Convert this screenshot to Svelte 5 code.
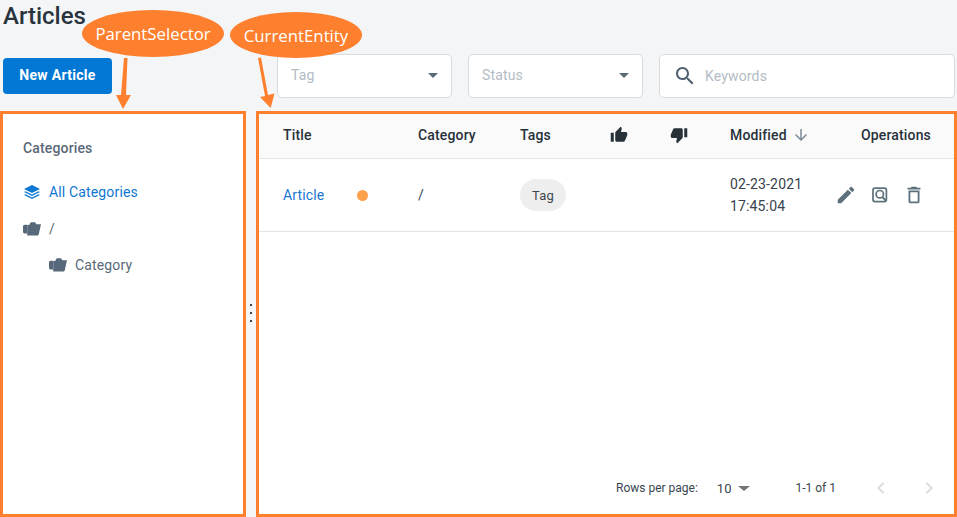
<script lang="ts">
  const columns = ['Title', 'Category', 'Tags'];
</script>

{#snippet folder()}
  <svg class="folder" viewBox="0 0 18 14" aria-hidden="true">
    <path d="M0 4.500C0 3.400.8 2.700 1.800 2.700H4v8.800H1.800C.8 11.500 0 10.800 0 9.700z" />
    <path d="M4.200 3 6.500 2.800 7.200 1C7.400.5 7.800.3 8.300.3h3.300c.5 0 .8.2 1 .6l.7 1.300H18l-2.300 10.400c-.1.500-.5.800-1 .8H4.200z" />
  </svg>
{/snippet}

<div class="page">
  <h1>Articles</h1>

  <div class="toolbar">
    <button type="button" class="primary">New Article</button>
    <div class="filters">
      <div class="field select"><span>Tag</span><i class="caret"></i></div>
      <div class="field select"><span>Status</span><i class="caret"></i></div>
      <div class="field search">
        <svg viewBox="0 0 24 24" aria-hidden="true"><path d="M15.5 14h-.79l-.28-.27C15.41 12.59 16 11.11 16 9.5 16 5.91 13.09 3 9.5 3S3 5.91 3 9.5 5.91 16 9.5 16c1.61 0 3.09-.59 4.23-1.57l.27.28v.79l5 4.99L20.49 19l-4.99-5zm-6 0C7.01 14 5 11.99 5 9.5S7.01 5 9.5 5 14 7.01 14 9.5 11.99 14 9.5 14z" /></svg>
        <span>Keywords</span>
      </div>
    </div>
  </div>

  <div class="main">
    <aside class="panel side">
      <div class="side-title">Categories</div>
      <div class="tree-row active">
        <svg class="layers" viewBox="0 0 16 14" aria-hidden="true">
          <path d="M8 0 16 4 8 8 0 4z" />
          <path d="M1.500 6.300 8 9.500 14.500 6.300 16 7.100 8 11 0 7.100z" />
          <path d="M1.500 9.300 8 12.500 14.500 9.300 16 10.100 8 14 0 10.100z" />
        </svg>
        <span>All Categories</span>
      </div>
      <div class="tree-row">{@render folder()}<span>/</span></div>
      <div class="tree-row nested">{@render folder()}<span>Category</span></div>
    </aside>

    <div class="splitter"><b></b><b></b><b></b></div>

    <section class="panel content">
      <div class="grid head">
        {#each columns as col}
          <div>{col}</div>
        {/each}
        <div class="thumb">
          <svg viewBox="0 0 24 24" aria-hidden="true"><path d="M1 21h4V9H1v12zm22-11c0-1.1-.9-2-2-2h-6.31l.95-4.57.03-.32c0-.41-.17-.79-.44-1.06L14.17 1 7.59 7.59C7.22 7.95 7 8.45 7 9v10c0 1.1.9 2 2 2h9c.83 0 1.54-.5 1.84-1.22l3.02-7.05c.09-.23.14-.47.14-.73v-2z" /></svg>
        </div>
        <div class="thumb">
          <svg viewBox="0 0 24 24" aria-hidden="true"><path d="M15 3H6c-.83 0-1.54.5-1.84 1.22l-3.02 7.05c-.09.23-.14.47-.14.73v2c0 1.1.9 2 2 2h6.31l-.95 4.57-.03.32c0 .41.17.79.44 1.06L9.83 23l6.59-6.59c.36-.36.58-.86.58-1.41V5c0-1.1-.9-2-2-2zm4 0v12h4V3h-4z" /></svg>
        </div>
        <div class="modified">
          Modified
          <svg viewBox="0 0 24 24" aria-hidden="true"><path d="M20 12l-1.41-1.41L13 16.17V4h-2v12.17l-5.58-5.59L4 12l8 8 8-8z" /></svg>
        </div>
        <div>Operations</div>
      </div>

      <div class="grid row">
        <div class="title-cell"><span class="link">Article</span><i class="dot"></i></div>
        <div>/</div>
        <div><span class="chip">Tag</span></div>
        <div></div>
        <div></div>
        <div class="date">02-23-2021<br />17:45:04</div>
        <div class="ops">
          <svg class="edit" viewBox="0 0 24 24" aria-hidden="true"><path d="M3 17.25V21h3.75L17.81 9.94l-3.75-3.75L3 17.25zM20.71 7.04c.39-.39.39-1.02 0-1.41l-2.34-2.34c-.39-.39-1.02-.39-1.41 0l-1.83 1.83 3.75 3.75 1.83-1.83z" /></svg>
          <svg class="preview" viewBox="0 0 16 16" aria-hidden="true">
            <rect x="1" y="1.200" width="13.400" height="13.400" rx="2" fill="none" stroke-width="1.700" />
            <circle cx="7.800" cy="7.200" r="3.700" fill="none" stroke-width="1.700" />
            <path d="M10.300 10l3.800 3.800" fill="none" stroke-width="1.800" />
          </svg>
          <svg class="trash" viewBox="0 0 24 24" aria-hidden="true"><path d="M6 19c0 1.1.9 2 2 2h8c1.1 0 2-.9 2-2V7H6v12zM8 9h8v10H8V9zm7.5-5l-1-1h-5l-1 1H5v2h14V4h-3.5z" /></svg>
        </div>
      </div>

      <div class="pager">
        <span class="rows-label">Rows per page:</span>
        <span class="rows-value">10</span>
        <i class="caret grey"></i>
        <span class="range">1-1 of 1</span>
        <svg viewBox="0 0 24 24" aria-hidden="true"><path d="M15.41 7.41L14 6l-6 6 6 6 1.41-1.41L10.83 12z" /></svg>
        <svg viewBox="0 0 24 24" aria-hidden="true"><path d="M10 6L8.59 7.41 13.17 12l-4.58 4.59L10 18l6-6z" /></svg>
      </div>
    </section>
  </div>

  <!-- annotations drawn over the screenshot -->
  <div class="bubble parent">ParentSelector</div>
  <div class="bubble current">CurrentEntity</div>
  <svg class="arrows" viewBox="0 0 300 60" aria-hidden="true">
    <path d="M124 1h3.500L126 38h5L123 52 116 38h5z" />
    <path d="M258 1l3-.500L268 38l6.500-1.500-3.800 14.500L260 40l5-1z" />
  </svg>
</div>

<style>
  :global(body) {
    background: #f4f5f7;
  }

  .page {
    position: relative;
    display: flex;
    flex-direction: column;
    height: 517px;
    overflow: hidden;
    box-sizing: border-box;
    font-family: Roboto, "Liberation Sans", sans-serif;
    font-size: 14px;
    letter-spacing: .15px;
    color: #2a3540;
  }

  h1 {
    margin: 0;
    padding-left: 3px;
    height: 32px;
    font-size: 24px;
    line-height: 32px;
    font-weight: 500;
    letter-spacing: 0;
    color: #29333d;
  }

  .toolbar {
    display: flex;
    align-items: center;
    height: 44px;
    margin-top: 22px;
    padding: 0 2px 0 3px;
  }

  .primary {
    width: 109px;
    height: 36px;
    padding: 0 0 2px;
    border: none;
    border-radius: 4px;
    background: #0277d4;
    color: #fff;
    font: 700 14px Roboto, sans-serif;
    letter-spacing: .3px;
  }

  .filters {
    display: flex;
    flex: 1;
    gap: 16px;
    margin-left: 165px;
  }

  .field {
    display: flex;
    align-items: center;
    box-sizing: border-box;
    height: 44px;
    background: #fff;
    border: 1px solid #d8dbde;
    border-radius: 5px;
    color: #b3bcc4;
  }

  .select {
    width: 175px;
    justify-content: space-between;
    padding: 0 13px 2px 13px;
  }

  .search {
    flex: 1;
    padding-left: 13px;
    gap: 8px;
  }

  .search svg {
    width: 24px;
    height: 24px;
    fill: #4e5f70;
  }

  .caret {
    display: block;
    width: 0;
    height: 0;
    border-left: 5px solid transparent;
    border-right: 5px solid transparent;
    border-top: 5px solid #5a6b78;
  }

  .caret.grey {
    border-left-width: 6px;
    border-right-width: 6px;
    border-top-color: #757575;
  }

  .main {
    flex: 1;
    display: flex;
    margin-top: 13px;
    min-height: 0;
  }

  .panel {
    box-sizing: border-box;
    background: #fff;
    border: 3px solid #fe7f2d;
  }

  .side {
    width: 246px;
    padding: 20px 20px 0;
    color: #5a6978;
  }

  .side-title {
    height: 28px;
    line-height: 28px;
    font-weight: 500;
    margin-bottom: 12px;
  }

  .tree-row {
    display: flex;
    align-items: center;
    height: 36.500px;
    gap: 8px;
  }

  .tree-row.active {
    color: #0f77d2;
  }

  .tree-row.nested {
    padding-left: 26px;
  }

  .layers {
    width: 16px;
    height: 14px;
    margin: 0 1px;
    fill: #0f77d2;
  }

  .folder {
    width: 18px;
    height: 14px;
    fill: #56687a;
  }

  .splitter {
    width: 10px;
    display: flex;
    flex-direction: column;
    align-items: center;
    justify-content: center;
    gap: 6px;
    padding-bottom: 3px;
    box-sizing: border-box;
  }

  .splitter b {
    width: 2px;
    height: 2px;
    background: #3c4650;
  }

  .content {
    flex: 1;
    display: flex;
    flex-direction: column;
    min-width: 0;
  }

  .grid {
    display: grid;
    box-sizing: border-box;
    grid-template-columns: 135px 102px 90px 60px 60px 131px 1fr;
    padding-left: 24px;
    align-items: center;
  }

  .head {
    height: 45px;
    padding-bottom: 2px;
    background: #fafafa;
    border-bottom: 1px solid #e4e4e4;
    font-weight: 500;
    color: #28313a;
  }

  .thumb svg {
    display: block;
    width: 18px;
    height: 18px;
    fill: #263238;
  }

  .modified {
    display: flex;
    align-items: center;
    gap: 5px;
  }

  .modified svg {
    width: 18px;
    height: 18px;
    fill: #7d8b96;
  }

  .row {
    height: 73px;
    border-bottom: 1px solid #e4e4e4;
    color: #37424d;
  }

  .title-cell {
    display: flex;
    align-items: center;
    gap: 33px;
  }

  .link {
    color: #1a78d0;
  }

  .dot {
    width: 11px;
    height: 11px;
    margin-top: 1px;
    border-radius: 50%;
    background: #ffa04d;
  }

  .chip {
    display: inline-block;
    width: 46px;
    height: 32px;
    line-height: 33px;
    text-align: center;
    border-radius: 16px;
    background: #eeeeee;
    font-size: 13px;
    color: #3c4650;
  }

  .date {
    line-height: 22px;
    font-size: 14px;
  }

  .ops {
    display: flex;
    align-items: center;
    margin-left: -26px;
  }

  .ops svg {
    fill: #5d717d;
    stroke: #5d717d;
  }

  .edit {
    width: 22px;
    height: 22px;
    stroke: none !important;
  }

  .preview {
    width: 16px;
    height: 16px;
    margin-left: 15px;
    fill: none !important;
  }

  .trash {
    width: 22px;
    height: 22px;
    margin-left: 15px;
    stroke: none !important;
  }

  .pager {
    display: flex;
    align-items: center;
    margin-top: auto;
    height: 52px;
    padding-left: 357px;
    font-size: 12px;
    letter-spacing: 0;
    color: #3a4550;
  }

  .rows-value {
    margin-left: 19px;
    font-size: 13px;
  }

  .pager .caret {
    margin-left: 7px;
  }

  .range {
    margin-left: 45px;
  }

  .pager svg {
    width: 24px;
    height: 24px;
    fill: #dedede;
  }

  .pager svg:nth-of-type(1) {
    margin-left: 33px;
  }

  .pager svg:nth-of-type(2) {
    margin-left: 24px;
  }

  .bubble {
    position: absolute;
    display: flex;
    align-items: center;
    justify-content: center;
    border-radius: 50%;
    background: #fe7f2d;
    color: #fff;
    font-family: "Open Sans", sans-serif;
    font-size: 16.800px;
    letter-spacing: 0;
  }

  .parent {
    left: 82px;
    top: 10px;
    width: 142px;
    height: 47px;
  }

  .current {
    left: 230px;
    top: 12px;
    width: 132px;
    height: 46px;
  }

  .arrows {
    position: absolute;
    left: 0;
    top: 57px;
    width: 300px;
    height: 60px;
    fill: #fe7f2d;
  }
</style>
